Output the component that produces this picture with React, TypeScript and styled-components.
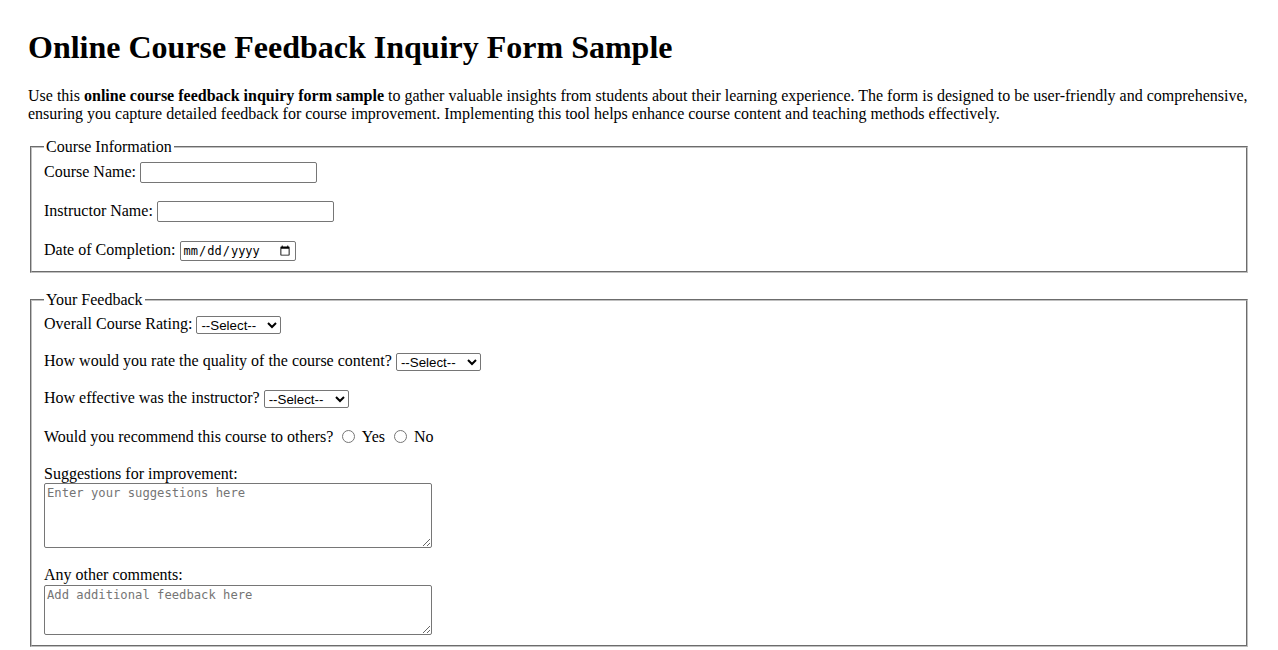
import styled, { createGlobalStyle } from 'styled-components';

const GlobalStyle = createGlobalStyle`
  html,
  body {
    margin: 0;
    padding: 0;
    background: #fff;
  }
  body {
    font-family: "Liberation Serif", "Times New Roman", serif;
    font-size: 16px;
    color: #000;
  }
`;

const Page = styled.div`
  padding: 29px 28px 20px;
`;

const Title = styled.h1`
  margin: 0 0 21px;
  font-size: 32px;
  font-weight: 700;
  line-height: 37px;
`;

const Intro = styled.p`
  margin: 0 0 15px;
  line-height: 18px;
`;

const Fieldset = styled.fieldset<{ $mb?: number }>`
  margin: 0 2px ${(p) => p.$mb ?? 0}px;
  padding: 5.6px 12px 10px;
  border: 2px groove rgb(192, 192, 192);
  min-width: 0;
`;

const Legend = styled.legend`
  padding: 0 2px;
  font-size: 16px;
  line-height: 18.4px;
`;

const Row = styled.div<{ $h: number; $mb?: number }>`
  display: flex;
  align-items: center;
  gap: 4px;
  height: ${(p) => p.$h}px;
  margin-bottom: ${(p) => p.$mb ?? 0}px;
  line-height: 18.4px;
  white-space: nowrap;
`;

const InlineRow = styled.div<{ $mb?: number }>`
  line-height: 18.4px;
  height: 19px;
  margin-bottom: ${(p) => p.$mb ?? 0}px;
  white-space: nowrap;
`;

const BlockLabel = styled.label`
  display: block;
  line-height: 18.4px;
`;

const TextInput = styled.input`
  box-sizing: border-box;
  width: 177px;
  height: 21px;
  margin: 0;
  padding: 1px 2px;
  border: 1px solid #767676;
  border-radius: 2px;
  font: 13.333px "Liberation Sans", Arial, sans-serif;
  background: #fff;
`;

const DateInput = styled(TextInput)`
  width: 116px;
  height: 20px;
  font: 12px "DejaVu Sans Mono", monospace;
  color: #000;
`;

const Select = styled.select`
  box-sizing: border-box;
  width: 85px;
  height: 18px;
  margin: 0;
  padding: 0;
  border: 1px solid #767676;
  border-radius: 2px;
  font: 13.333px "Liberation Sans", Arial, sans-serif;
  color: #000;
  background: #fff;
`;

const Radio = styled.input`
  width: 13px;
  height: 13px;
  margin: 3px 3px 0 5px;
  vertical-align: -1px;
`;

const TextArea = styled.textarea<{ $h: number }>`
  display: block;
  box-sizing: border-box;
  width: 388px;
  height: ${(p) => p.$h}px;
  margin: 0;
  padding: 2px;
  border: 1px solid #767676;
  border-radius: 2px;
  font: 12.2px/15px "DejaVu Sans Mono", monospace;
  resize: both;

  &::placeholder {
    color: #757575;
  }
`;

const Gap = styled.div<{ $h: number }>`
  height: ${(p) => p.$h}px;
`;

export default function App() {
  return (
    <Page>
      <GlobalStyle />
      <Title>Online Course Feedback Inquiry Form Sample</Title>
      <Intro>
        Use this <strong>online course feedback inquiry form sample</strong> to gather valuable
        insights from students about their learning experience. The form is designed to be
        user-friendly and comprehensive, ensuring you capture detailed feedback for course
        improvement. Implementing this tool helps enhance course content and teaching methods
        effectively.
      </Intro>
      <form onSubmit={(e) => e.preventDefault()}>
        <Fieldset $mb={18}>
          <Legend>Course Information</Legend>
          <Row $h={21} $mb={18}>
            <label htmlFor="courseName">Course Name:</label>
            <TextInput id="courseName" type="text" />
          </Row>
          <Row $h={21} $mb={18}>
            <label htmlFor="instructorName">Instructor Name:</label>
            <TextInput id="instructorName" type="text" />
          </Row>
          <Row $h={21}>
            <label htmlFor="completionDate">Date of Completion:</label>
            <DateInput id="completionDate" type="date" />
          </Row>
        </Fieldset>

        <Fieldset>
          <Legend>Your Feedback</Legend>
          <Row $h={19} $mb={18}>
            <label htmlFor="rating">Overall Course Rating:</label>
            <Select id="rating" defaultValue="">
              <option value="">--Select--</option>
              <option>Excellent</option>
              <option>Good</option>
              <option>Average</option>
              <option>Poor</option>
            </Select>
          </Row>
          <Row $h={19} $mb={18}>
            <label htmlFor="content">How would you rate the quality of the course content?</label>
            <Select id="content" defaultValue="">
              <option value="">--Select--</option>
              <option>Excellent</option>
              <option>Good</option>
              <option>Average</option>
              <option>Poor</option>
            </Select>
          </Row>
          <Row $h={19} $mb={19}>
            <label htmlFor="instructor">How effective was the instructor?</label>
            <Select id="instructor" defaultValue="">
              <option value="">--Select--</option>
              <option>Very effective</option>
              <option>Effective</option>
              <option>Somewhat effective</option>
              <option>Not effective</option>
            </Select>
          </Row>
          <InlineRow $mb={19}>
            Would you recommend this course to others?{' '}
            <Radio type="radio" name="recommend" id="recYes" value="yes" />{' '}
            <label htmlFor="recYes">Yes</label>{' '}
            <Radio type="radio" name="recommend" id="recNo" value="no" />{' '}
            <label htmlFor="recNo">No</label>
          </InlineRow>
          <BlockLabel htmlFor="suggestions">Suggestions for improvement:</BlockLabel>
          <TextArea id="suggestions" $h={65} placeholder="Enter your suggestions here" />
          <Gap $h={18} />
          <BlockLabel htmlFor="comments">Any other comments:</BlockLabel>
          <TextArea id="comments" $h={50} placeholder="Add additional feedback here" />
        </Fieldset>
      </form>
    </Page>
  );
}
